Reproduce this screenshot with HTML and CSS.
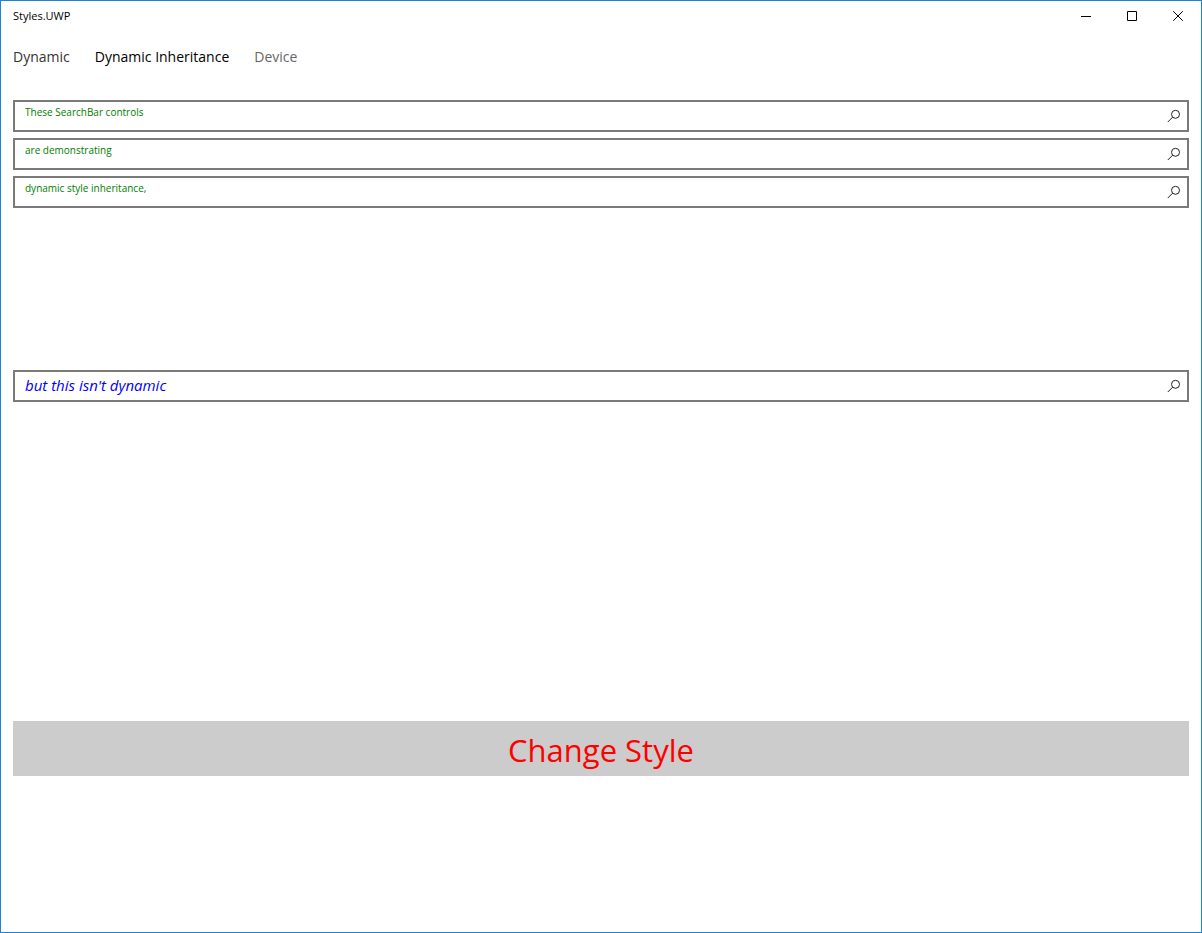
FILE: index.html
```html
<!DOCTYPE html>
<html lang="en">
<head>
<meta charset="utf-8">
<title>Styles.UWP</title>
<link rel="stylesheet" href="styles.css">
</head>
<body>
<svg class="sprite" width="0" height="0" aria-hidden="true">
  <symbol id="search" viewBox="0 0 14 14"><circle cx="8.5" cy="5.3" r="4" /><path d="M5.6 8.2 L0.8 13" /></symbol>
</svg>
<div class="window">
  <header class="titlebar">
    <h1 class="title">Styles.UWP</h1>
    <div class="controls">
      <button class="control" type="button" aria-label="Minimize"><svg class="glyph" viewBox="0 0 11 11"><path d="M0 5.5H10" /></svg></button>
      <button class="control" type="button" aria-label="Maximize"><svg class="glyph" viewBox="0 0 11 11"><path d="M0.5 0.5H9.5V9.5H0.5Z" /></svg></button>
      <button class="control" type="button" aria-label="Close"><svg class="glyph" viewBox="0 0 11 11"><path d="M0.2 0.2L9.8 9.8M9.8 0.2L0.2 9.8" /></svg></button>
    </div>
  </header>
  <nav class="tabs">
    <a class="tab" href="#dynamic">Dynamic</a>
    <a class="tab tab-current" href="#inheritance" aria-current="page">Dynamic Inheritance</a>
    <a class="tab tab-dim" href="#device">Device</a>
  </nav>
  <main class="page">
    <form class="search"><input class="field field-green" type="text" aria-label="First search" value="These SearchBar controls"><button class="go" type="button" aria-label="Search"><svg class="icon"><use href="#search" /></svg></button></form>
    <form class="search"><input class="field field-green" type="text" aria-label="Second search" value="are demonstrating"><button class="go" type="button" aria-label="Search"><svg class="icon"><use href="#search" /></svg></button></form>
    <form class="search"><input class="field field-green" type="text" aria-label="Third search" value="dynamic style inheritance,"><button class="go" type="button" aria-label="Search"><svg class="icon"><use href="#search" /></svg></button></form>
    <div class="expand">
      <form class="search"><input class="field field-blue" type="text" aria-label="Fourth search" value="but this isn't dynamic"><button class="go" type="button" aria-label="Search"><svg class="icon"><use href="#search" /></svg></button></form>
    </div>
    <div class="expand">
      <button class="change" type="button">Change Style</button>
    </div>
  </main>
</div>
</body>
</html>
```
FILE: styles.css
```css
* { box-sizing: border-box; }

body {
  margin: 0;
  background: #fff;
  color: #000;
  font-family: "Open Sans", "Noto Sans", sans-serif;
}

button, input {
  margin: 0;
  padding: 0;
  border: 0;
  background: none;
  font-family: inherit;
}

.sprite { position: absolute; }

.window {
  display: flex;
  flex-direction: column;
  min-height: 100vh;
  border: 1px solid #1f83d6;
}

.titlebar {
  display: flex;
  justify-content: space-between;
  height: 31px;
  padding-left: 12px;
}

.title {
  margin: 0;
  font-size: 11px;
  font-weight: 400;
  line-height: 30px;
}

.controls { display: flex; }

.control {
  display: flex;
  align-items: center;
  justify-content: center;
  width: 46px;
  height: 30px;
}

.glyph {
  width: 11px;
  height: 11px;
  fill: none;
  stroke: #000;
}

.tabs {
  display: flex;
  gap: 25px;
  height: 68px;
  padding: 14px 12px 0;
}

.tab {
  color: #333;
  font-size: 14px;
  line-height: 22px;
  text-decoration: none;
}

.tab-current { color: #000; }
.tab-dim { color: #666; }

.page {
  display: flex;
  flex: 1;
  flex-direction: column;
  gap: 6px;
  padding: 0 12px;
}

.search {
  display: flex;
  width: 100%;
  height: 32px;
  border: 2px solid #7a7a7a;
}

.field {
  flex: 1;
  min-width: 0;
  padding-left: 10px;
  outline: 0;
}

.field-green {
  padding-bottom: 8px;
  color: #008000;
  font-size: 10px;
}

.field-blue {
  padding-bottom: 2px;
  color: #00f;
  font-size: 15px;
  font-style: italic;
}

.go {
  display: flex;
  align-items: center;
  justify-content: center;
  width: 26px;
}

.icon {
  width: 14px;
  height: 14px;
  fill: none;
  stroke: #222;
}

.expand {
  display: flex;
  flex: 1 1 auto;
  align-items: center;
}

.change {
  width: 100%;
  height: 55px;
  padding-top: 4px;
  background: #ccc;
  color: #f00;
  font-size: 31px;
  line-height: 40px;
}
```
